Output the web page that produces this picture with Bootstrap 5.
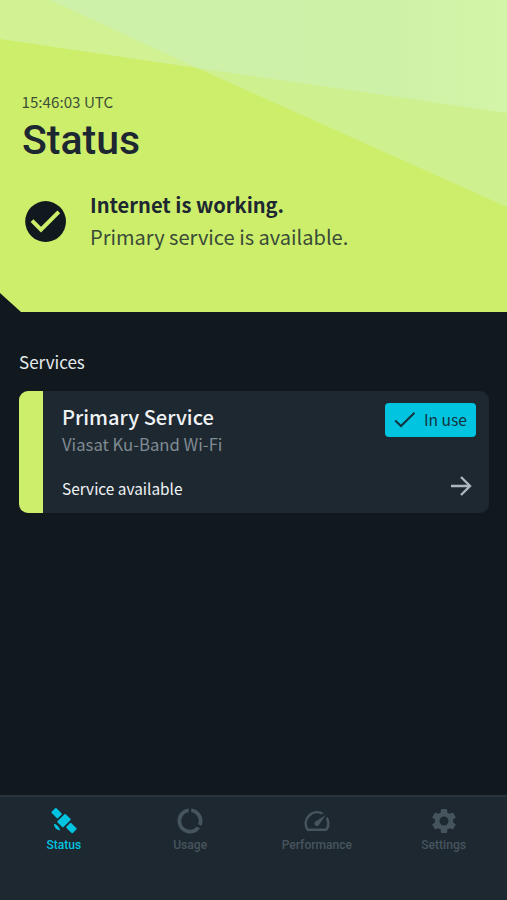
<!DOCTYPE html>
<html lang="en">
<head>
  <meta charset="UTF-8" />
  <meta name="viewport" content="width=device-width, initial-scale=1.0"/>
  <title>Status</title>
  <link href="https://cdn.jsdelivr.net/npm/bootstrap@5.3.0/dist/css/bootstrap.min.css" rel="stylesheet"/>
  <style>
    body {
      font-family: "Noto Sans CJK SC", "Noto Sans", sans-serif;
      background: #11191f;
      color: #e6ebee;
      overflow: hidden;
    }
    svg { display: block; flex: none; }
    .hero-section {
      height: 312px;
      padding: 90px 22px 0;
      color: #1c2731;
      clip-path: polygon(0 0, 100% 0, 100% 100%, 21px 100%, 0 293px);
      background: #cdee6b;
      isolation: isolate;
    }
    .hero-facets { inset: 0; z-index: -1; }
    .hero-time { font-size: 15.2px; line-height: 22px; color: #3d5036; margin-left: -0.5px; }
    .hero-title {
      font-family: Roboto, sans-serif;
      font-size: 41px;
      line-height: 50px;
      font-weight: 500;
      margin-top: 3px;
    }
    .hero-message { margin-top: 24px; gap: 20px; }
    .hero-strong { font-size: 20.1px; line-height: 32px; font-weight: 700; }
    .hero-line { font-size: 20.05px; line-height: 32px; color: #3a4b38; }
    .services-area { padding: 38px 18px 0 19px; }
    .services-label { font-size: 17px; line-height: 24px; margin-bottom: 17px; }
    .service-card {
      height: 122px;
      border-radius: 9px;
      background: #1e2830;
      color: #f0f3f5;
    }
    .service-stripe { width: 24px; background: #cdee6b; }
    .service-body { padding: 12px 13px 12px 19px; }
    .service-name { font-size: 20.1px; line-height: 28px; font-weight: 500; }
    .service-kind { font-size: 16.7px; line-height: 26px; color: #7f8b93; }
    .service-state { font-size: 15.4px; line-height: 24px; }
    .service-arrow { margin: 0 4px 4px 0; }
    .use-chip {
      width: 91px;
      height: 34px;
      padding-left: 8px;
      gap: 7px;
      border-radius: 4px;
      background: #00c4e0;
      color: #12333e;
      font-size: 15.6px;
    }
    .tab-bar {
      height: 105px;
      padding-top: 9px;
      border-top: 2px solid #27333c;
      background: #1e2830;
      font-family: Roboto, sans-serif;
      font-weight: 500;
      font-size: 12.1px;
      line-height: 16px;
    }
    .tab-item { color: #46545e; text-decoration: none; gap: 1px; }
    .tab-item.active { color: #00c4e0; padding-left: 1px; }
  </style>
</head>
<body class="vh-100 d-flex flex-column">
  <header class="hero-section position-relative">
    <svg class="hero-facets position-absolute" width="507" height="312" viewBox="0 0 507 312">
      <defs>
        <linearGradient id="sheen" x1="0" y1="0" x2="1" y2="0">
          <stop offset="0.4" stop-color="#cdf1a8"/>
          <stop offset="0.75" stop-color="#cdf1a6"/>
          <stop offset="1" stop-color="#d3f5a8"/>
        </linearGradient>
      </defs>
      <path d="M0 0H507V113L197 68L0 39Z" fill="#d1f193"/>
      <path d="M50 0H507V207L197 68Z" fill="#cff08f"/>
      <path d="M50 0H507V113L197 68Z" fill="url(#sheen)"/>
    </svg>
    <div class="hero-time">15:46:03 UTC</div>
    <h1 class="hero-title mb-0">Status</h1>
    <div class="hero-message d-flex align-items-center">
      <svg width="48" height="49" viewBox="0 0 24 24">
        <circle cx="11.8" cy="12" r="10.2" fill="#11191f"/>
        <path d="M5 11.6L9.5 16.1L18.4 7.2" fill="none" stroke="#cdee6b" stroke-width="2"/>
      </svg>
      <div>
        <div class="hero-strong">Internet is working.</div>
        <div class="hero-line">Primary service is available.</div>
      </div>
    </div>
  </header>

  <main class="services-area flex-grow-1">
    <h2 class="services-label fw-normal">Services</h2>
    <div class="service-card d-flex overflow-hidden">
      <div class="service-stripe"></div>
      <div class="service-body flex-grow-1 d-flex flex-column justify-content-between">
        <div class="d-flex justify-content-between">
          <div>
            <div class="service-name">Primary Service</div>
            <div class="service-kind">Viasat Ku-Band Wi-Fi</div>
          </div>
          <div class="use-chip d-flex align-items-center">
            <svg width="24" height="24" viewBox="0 0 24 24" fill="none" stroke="currentColor" stroke-width="2">
              <path d="M2.2 12.5L8 18L21.5 4.7"/>
            </svg>
            <span>In use</span>
          </div>
        </div>
        <div class="d-flex justify-content-between align-items-center">
          <div class="service-state">Service available</div>
          <svg class="service-arrow" width="22" height="22" viewBox="0 0 22 22" fill="none" stroke="#adb6bc" stroke-width="2.4">
            <path d="M1 11H20M11 2L20 11L11 20"/>
          </svg>
        </div>
      </div>
    </div>
  </main>

  <nav class="tab-bar d-flex">
    <a class="tab-item active col-3 d-flex flex-column align-items-center" href="#">
      <svg width="30" height="30" viewBox="0 0 30 30" fill="currentColor">
        <g transform="translate(15 14.6) rotate(45)">
          <rect x="-15" y="-3.4" width="9" height="6.8" rx="1"/>
          <rect x="-4.2" y="-5.8" width="8.4" height="11.6" rx="1"/>
          <rect x="6" y="-3.4" width="9" height="6.8" rx="1"/>
        </g>
        <path d="M4.8 17.8Q9.6 18.8 11.2 24.4Q5.4 23.8 4.8 17.8Z"/>
      </svg>
      <span>Status</span>
    </a>
    <a class="tab-item col-3 d-flex flex-column align-items-center" href="#">
      <svg width="30" height="30" viewBox="0 0 24 24" fill="currentColor">
        <path d="M13 2.05v3.03c3.39.49 6 3.39 6 6.92 0 .9-.18 1.75-.48 2.54l2.6 1.53c.56-1.24.88-2.62.88-4.07 0-5.18-3.95-9.45-9-9.95zM12 19c-3.87 0-7-3.13-7-7 0-3.53 2.61-6.43 6-6.92V2.05c-5.06.5-9 4.76-9 9.95 0 5.52 4.47 10 9.99 10 3.31 0 6.24-1.61 8.06-4.09l-2.6-1.53C16.17 17.98 14.21 19 12 19z"/>
      </svg>
      <span>Usage</span>
    </a>
    <a class="tab-item col-3 d-flex flex-column align-items-center" href="#">
      <svg width="30" height="30" viewBox="0 0 24 24" fill="currentColor">
        <path d="M20.38 8.57l-1.23 1.85a8 8 0 0 1-.22 7.58H5.07A8 8 0 0 1 15.58 6.85l1.85-1.23A10 10 0 0 0 3.35 19a2 2 0 0 0 1.72 1h13.85a2 2 0 0 0 1.74-1 10 10 0 0 0-.27-10.44zm-9.79 6.84a2 2 0 0 0 2.83 0l5.66-8.49-8.49 5.66a2 2 0 0 0 0 2.83z"/>
      </svg>
      <span>Performance</span>
    </a>
    <a class="tab-item col-3 d-flex flex-column align-items-center" href="#">
      <svg width="30" height="30" viewBox="0 0 24 24" fill="currentColor">
        <path d="M19.14 12.94c.04-.3.06-.61.06-.94 0-.32-.02-.64-.07-.94l2.03-1.58c.18-.14.23-.41.12-.61l-1.92-3.32c-.12-.22-.37-.29-.59-.22l-2.39.96c-.5-.38-1.03-.7-1.62-.94l-.36-2.54c-.04-.24-.24-.41-.48-.41h-3.84c-.24 0-.43.17-.47.41l-.36 2.54c-.59.24-1.13.57-1.62.94l-2.39-.96c-.22-.08-.47 0-.59.22L2.74 8.87c-.12.21-.08.47.12.61l2.03 1.58c-.05.3-.09.63-.09.94s.02.64.07.94l-2.03 1.58c-.18.14-.23.41-.12.61l1.92 3.32c.12.22.37.29.59.22l2.39-.96c.5.38 1.03.7 1.62.94l.36 2.54c.05.24.24.41.48.41h3.84c.24 0 .44-.17.47-.41l.36-2.54c.59-.24 1.13-.56 1.62-.94l2.39.96c.22.08.47 0 .59-.22l1.92-3.32c.12-.22.07-.47-.12-.61l-2.01-1.58zM12 15.6c-1.98 0-3.6-1.62-3.6-3.6s1.62-3.6 3.6-3.6 3.6 1.62 3.6 3.6-1.62 3.6-3.6 3.6z"/>
      </svg>
      <span>Settings</span>
    </a>
  </nav>
  <script src="https://cdn.jsdelivr.net/npm/bootstrap@5.3.0/dist/js/bootstrap.bundle.min.js"></script>
</body>
</html>
